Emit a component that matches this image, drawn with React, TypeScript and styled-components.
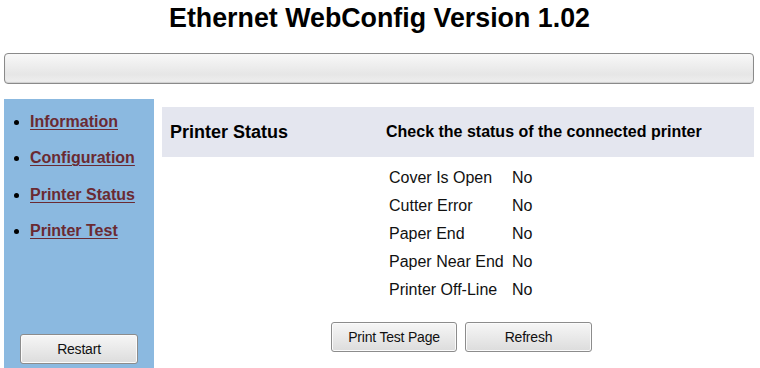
import styled, { createGlobalStyle } from 'styled-components';

const GlobalStyle = createGlobalStyle`
  body {
    margin: 0;
    background: #ffffff;
    font-family: 'Liberation Sans', Arial, sans-serif;
    color: #000000;
  }
`;

const Page = styled.div`
  width: 760px;
  height: 368px;
  overflow: hidden;
  padding: 0 6px 0 4px;
  box-sizing: border-box;
`;

const Title = styled.h1`
  margin: 0;
  height: 36px;
  padding-top: 3px;
  text-align: center;
  font-size: 26.8px;
  font-weight: bold;
  line-height: 30px;
  padding-left: 1px;
`;

const TopBar = styled.div`
  margin-top: 14px;
  height: 29px;
  border: 1px solid #8a8a8a;
  border-radius: 4px;
  background: linear-gradient(#f8f8f8, #e6e6e6 70%, #efefef);
  box-shadow: inset 0 -1px 1px #d0d0d0;
`;

const Body = styled.div`
  display: flex;
  margin-top: 15px;
  height: 269px;
`;

const Sidebar = styled.nav`
  width: 150px;
  flex-shrink: 0;
  background: #8bb9e0;
  display: flex;
  flex-direction: column;
  justify-content: space-between;
  padding: 13px 0 4px 0;
  box-sizing: border-box;
`;

const NavList = styled.ul`
  margin: 0;
  padding: 0 0 0 26px;
  list-style: disc;
`;

const NavItem = styled.li`
  height: 36.4px;
  line-height: 20px;
  font-size: 16px;
  font-weight: bold;
  &::marker {
    color: #000;
  }
`;

const NavLink = styled.a`
  color: #6a2a32;
  text-decoration: underline;
  text-decoration-thickness: 1px;
  text-underline-offset: 2px;
`;

const Button = styled.button<{ $w: number }>`
  width: ${(p) => p.$w}px;
  height: 30px;
  border: 1px solid #8c8c8c;
  border-radius: 3px;
  background: linear-gradient(#f6f6f6, #e8e8e8 55%, #dcdcdc);
  box-shadow: inset 0 0 0 1px #fbfbfb;
  font-family: 'Liberation Sans', Arial, sans-serif;
  font-size: 14px;
  color: #111;
  padding: 0;
  letter-spacing: -0.2px;
`;

const RestartRow = styled.div`
  padding-left: 16px;
`;

const Content = styled.main`
  flex: 1;
  margin-left: 8px;
  padding-top: 8px;
`;

const Header = styled.div`
  display: flex;
  align-items: center;
  height: 50px;
  background: #e4e6ef;
  font-weight: bold;
`;

const HeaderTitle = styled.div`
  width: 216px;
  padding-left: 8px;
  font-size: 18px;
`;

const HeaderDesc = styled.div`
  font-size: 16px;
`;

const StatusTable = styled.div`
  display: grid;
  grid-template-columns: 123px auto;
  margin: 7px 0 0 227px;
  font-size: 16px;
  line-height: 28px;
  color: #111;
`;

const ButtonRow = styled.div`
  display: flex;
  gap: 8px;
  margin: 18px 0 0 169px;
`;

const navItems = ['Information', 'Configuration', 'Printer Status', 'Printer Test'];

const statusRows: [string, string][] = [
  ['Cover Is Open', 'No'],
  ['Cutter Error', 'No'],
  ['Paper End', 'No'],
  ['Paper Near End', 'No'],
  ['Printer Off-Line', 'No'],
];

export default function App() {
  return (
    <>
      <GlobalStyle />
      <Page>
        <Title>Ethernet WebConfig Version 1.02</Title>
        <TopBar />
        <Body>
          <Sidebar>
            <NavList>
              {navItems.map((item) => (
                <NavItem key={item}>
                  <NavLink href="#">{item}</NavLink>
                </NavItem>
              ))}
            </NavList>
            <RestartRow>
              <Button $w={118}>Restart</Button>
            </RestartRow>
          </Sidebar>
          <Content>
            <Header>
              <HeaderTitle>Printer Status</HeaderTitle>
              <HeaderDesc>Check the status of the connected printer</HeaderDesc>
            </Header>
            <StatusTable>
              {statusRows.map(([label, value]) => (
                <>
                  <span key={label}>{label}</span>
                  <span key={label + '-v'}>{value}</span>
                </>
              ))}
            </StatusTable>
            <ButtonRow>
              <Button $w={126}>Print Test Page</Button>
              <Button $w={127}>Refresh</Button>
            </ButtonRow>
          </Content>
        </Body>
      </Page>
    </>
  );
}
